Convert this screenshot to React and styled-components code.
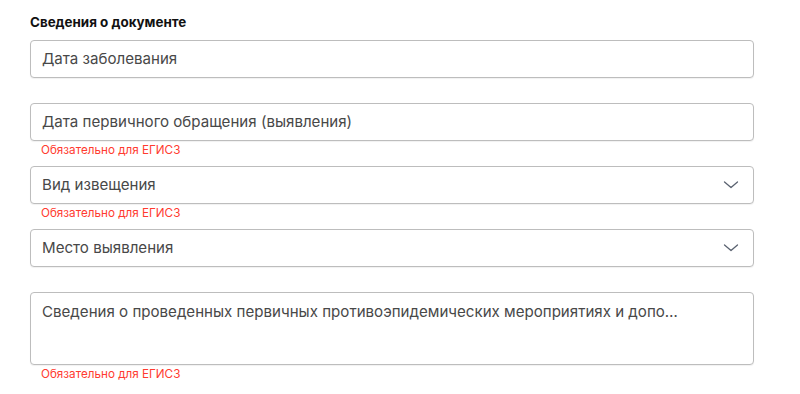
import React from "react";
import styled, { createGlobalStyle } from "styled-components";

const Global = createGlobalStyle`
  html, body { margin: 0; padding: 0; background: #fff; }
  body { font-family: Inter, "Noto Sans", sans-serif; }
  * { box-sizing: border-box; }
`;

const Page = styled.div`
  width: 800px;
  height: 394px;
  padding: 13px 46px 0 30px;
`;

const Title = styled.div`
  font-size: 13.4px;
  font-weight: 700;
  color: #111;
  line-height: 18px;
  margin-bottom: 9px;
`;

const Field = styled.div`
  display: flex;
  flex-direction: column;
  min-height: 63px;
`;

const Box = styled.div`
  flex-shrink: 0;
  height: ${(p) => (p.$tall ? "73px" : "38px")};
  border: 1px solid #bdbdbd;
  border-radius: 4px;
  background: #fff;
  display: flex;
  align-items: ${(p) => (p.$tall ? "flex-start" : "center")};
  padding: ${(p) => (p.$tall ? "9px 12px 0 11px" : "0 12px 0 11px")};
  box-shadow: 0 1px 1px rgba(0, 0, 0, 0.06);
`;

const Placeholder = styled.span`
  flex: 1;
  max-width: ${(p) => (p.$tall ? "642px" : "none")};
  font-size: 15.1px;
  color: #484848;
  white-space: nowrap;
  overflow: hidden;
  text-overflow: ellipsis;
  line-height: 20px;
`;

const Helper = styled.div`
  padding: 2px 0 0 11px;
  font-size: 11.7px;
  line-height: 14px;
  color: #ff3b30;
`;

const Chevron = () => (
  <svg width="16" height="8" viewBox="0 0 16 8" style={{ marginRight: 2 }}>
    <path d="M1.5 1 L8 6.5 L14.5 1" fill="none" stroke="#5a6270" strokeWidth="1.3" strokeLinecap="round" strokeLinejoin="round" />
  </svg>
);

const fields = [
  { label: "Дата заболевания" },
  { label: "Дата первичного обращения (выявления)", req: true },
  { label: "Вид извещения", req: true, select: true },
  { label: "Место выявления", select: true },
  {
    label:
      "Сведения о проведенных первичных противоэпидемических мероприятиях и дополнительные сведения",
    req: true,
    tall: true,
  },
];

export default function App() {
  return (
    <Page>
      <Global />
      <Title>Сведения о документе</Title>
      {fields.map((f) => (
        <Field key={f.label}>
          <Box $tall={f.tall}>
            <Placeholder $tall={f.tall}>{f.label}</Placeholder>
            {f.select && <Chevron />}
          </Box>
          {f.req && <Helper>Обязательно для ЕГИСЗ</Helper>}
        </Field>
      ))}
    </Page>
  );
}
